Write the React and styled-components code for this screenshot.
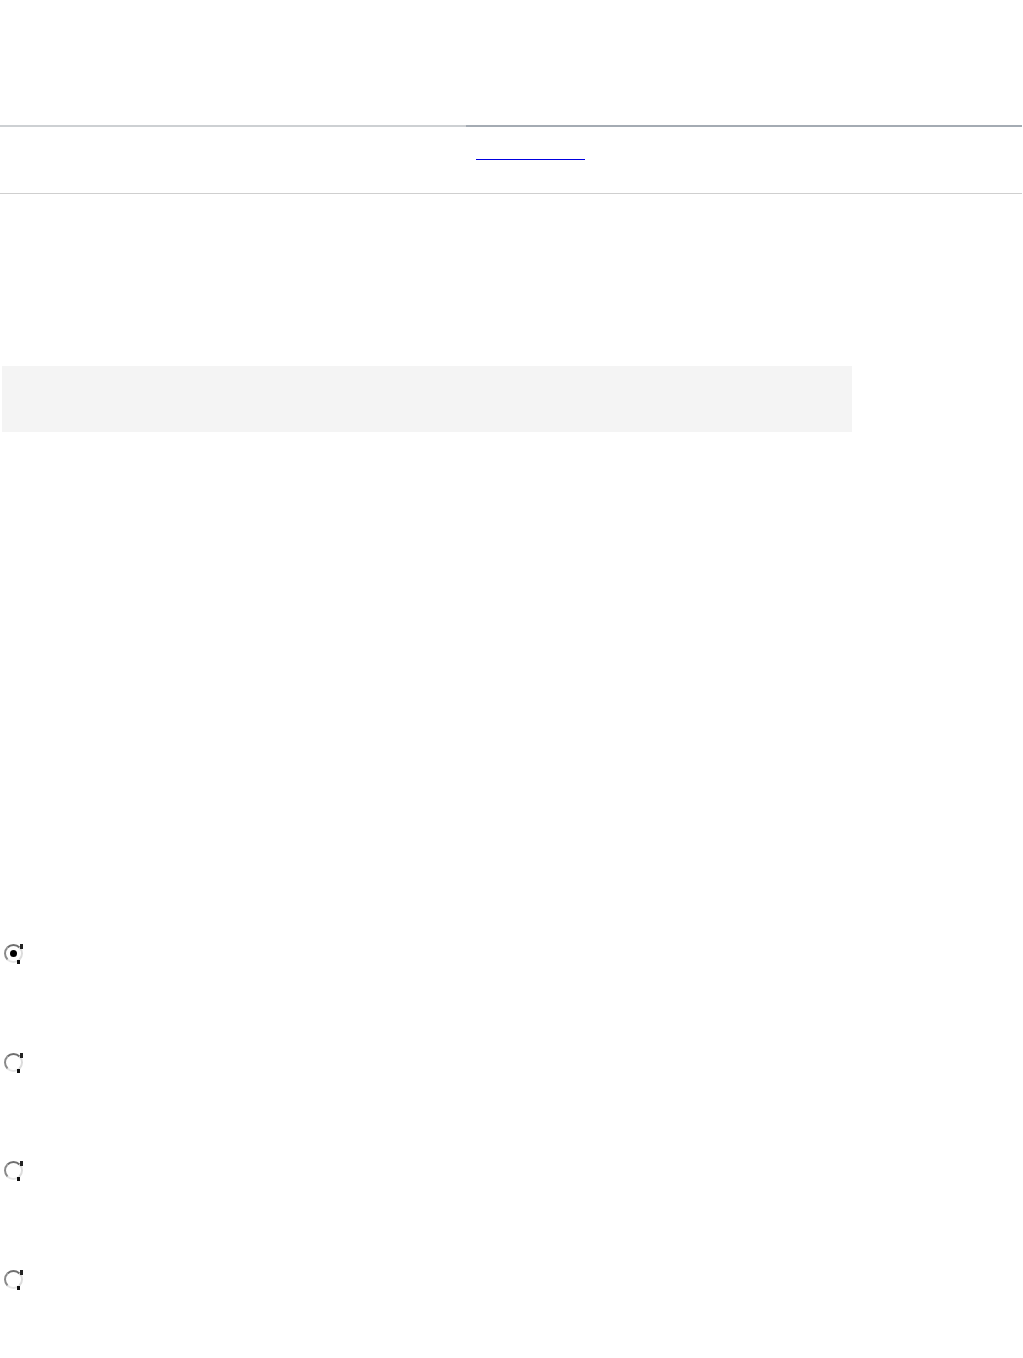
import styled, { createGlobalStyle } from "styled-components";

const Global = createGlobalStyle`
  html, body {
    margin: 0;
    padding: 0;
    background: #ffffff;
    font-family: "Liberation Sans", Arial, sans-serif;
  }
`;

const Page = styled.div`
  width: 1023px;
  min-height: 1358px;
  display: flex;
  flex-direction: column;
`;

const Header = styled.header`
  height: 125px;
`;

const TabBar = styled.nav`
  width: 1022px;
  display: grid;
  grid-template-columns: 466px 1fr;
  border-bottom: 1px solid #cfcfcf;
`;

const Tab = styled.div`
  height: 66px;
  border-top: 2px solid ${(p) => (p.$active ? "#a4abb3" : "#cdd0d3")};
  padding: 0 10px;
  display: flex;
  align-items: flex-start;
`;

// text in the reference is not drawn, only the link underline shows
const TabLink = styled.a`
  display: ${(p) => (p.$show ? "inline-block" : "none")};
  margin-top: 31px;
  width: 109px;
  height: 1px;
  overflow: hidden;
  color: transparent;
  font-size: 1px;
  border-bottom: 1px solid #0000e0;
  text-decoration: none;
`;

const Notice = styled.section`
  margin: 172px 0 0 2px;
  width: 850px;
  height: 66px;
  background: #f4f4f4;
`;

const Options = styled.ul`
  list-style: none;
  margin: 512px 0 0 0;
  padding: 0;
  display: flex;
  flex-direction: column;
`;

const Option = styled.li`
  height: 108.5px;
  padding-left: 4px;
`;

const Radio = styled.span`
  position: relative;
  display: block;
  width: 15px;
  height: 15px;
  border-radius: 50%;
  border: 2px solid;
  border-color: #6f6f6f #dcdcdc #e6e6e6 #8a8a8a;

  &::before {
    content: "";
    position: absolute;
    right: -2px;
    top: -2px;
    width: 3px;
    height: 5px;
    background: #222;
  }

  &::after {
    content: "";
    position: absolute;
    right: 1px;
    bottom: -3px;
    width: 3px;
    height: 4px;
    background: #111;
  }
`;

const Dot = styled.span`
  position: absolute;
  left: 4px;
  top: 4px;
  width: 7px;
  height: 7px;
  border-radius: 50%;
  background: #000;
`;

const options = [true, false, false, false];

export default function App() {
  return (
    <Page>
      <Global />
      <Header />
      <TabBar>
        <Tab>
          <TabLink />
        </Tab>
        <Tab $active>
          <TabLink $show href="#">Tab</TabLink>
        </Tab>
      </TabBar>
      <Notice />
      <Options>
        {options.map((checked, i) => (
          <Option key={i}>
            <Radio role="radio" aria-checked={checked}>
              {checked ? <Dot /> : null}
            </Radio>
          </Option>
        ))}
      </Options>
    </Page>
  );
}
